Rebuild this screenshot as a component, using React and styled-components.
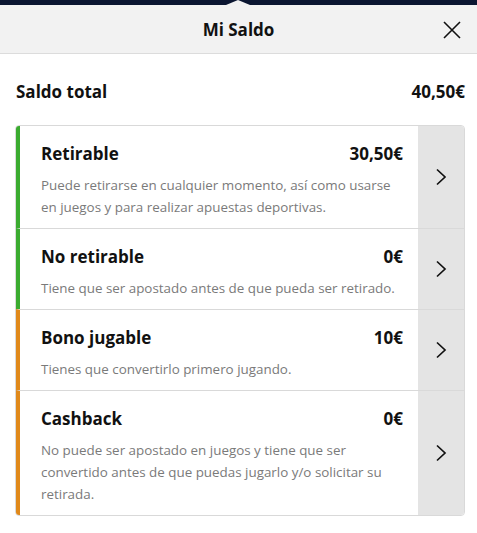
import React from "react";
import styled, { createGlobalStyle } from "styled-components";

const GlobalStyle = createGlobalStyle`
  html, body { margin: 0; padding: 0; background: #fff; }
  body { font-family: "Open Sans", "Noto Sans", sans-serif; color: #111; }
`;

const TopBar = styled.div`
  height: 5px;
  background: #0b1631;
  display: flex;
  justify-content: center;
  align-items: flex-end;
`;

const Caret = styled.div`
  width: 0;
  height: 0;
  margin-right: 2px;
  border-left: 12px solid transparent;
  border-right: 12px solid transparent;
  border-bottom: 5px solid #f2f2f2;
`;

const Header = styled.div`
  height: 48px;
  background: #f2f2f2;
  border-bottom: 1px solid #dcdcdc;
  display: flex;
  align-items: center;
  justify-content: center;
  position: relative;
`;

const HeaderTitle = styled.h1`
  margin: 0;
  font-size: 17px;
  font-weight: 700;
`;

const Close = styled.button`
  position: absolute;
  right: 16px;
  top: 16px;
  width: 18px;
  height: 18px;
  padding: 0;
  border: 0;
  background: none;
  cursor: pointer;
`;

const Body = styled.div`
  padding: 22px 12px 18px 15px;
`;

const TotalRow = styled.div`
  display: flex;
  justify-content: space-between;
  align-items: center;
  font-size: 17px;
  font-weight: 700;
  padding: 0 0 0 1px;
  height: 30px;
  margin-bottom: 19px;
`;

const Card = styled.div`
  border: 1px solid #d9d9d9;
  border-radius: 4px;
  overflow: hidden;
`;

const Row = styled.div`
  display: flex;
  border-left: 4px solid ${(p) => p.accent};
  & + & {
    border-top: 1px solid #d9d9d9;
  }
`;

const Content = styled.div`
  flex: 1;
  padding: 16px 15px 10px 21px;
`;

const TitleLine = styled.div`
  display: flex;
  justify-content: space-between;
  align-items: center;
  font-size: 17px;
  font-weight: 700;
  line-height: 24px;
`;

const Desc = styled.p`
  margin: 8px 0 0;
  font-size: 13.4px;
  line-height: 22px;
  color: #7a7a7a;
`;

const Arrow = styled.div`
  width: 46px;
  background: #e4e4e4;
  display: flex;
  align-items: center;
  justify-content: center;
`;

const Chevron = () => (
  <svg width="12" height="18" viewBox="0 0 12 18" fill="none">
    <path d="M2 1.5 L10 9 L2 16.5" stroke="#111" strokeWidth="1.7" />
  </svg>
);

const items = [
  {
    title: "Retirable",
    amount: "30,50€",
    desc: "Puede retirarse en cualquier momento, así como usarse en juegos y para realizar apuestas deportivas.",
    accent: "#3aab2f",
  },
  {
    title: "No retirable",
    amount: "0€",
    desc: "Tiene que ser apostado antes de que pueda ser retirado.",
    accent: "#3aab2f",
  },
  {
    title: "Bono jugable",
    amount: "10€",
    desc: "Tienes que convertirlo primero jugando.",
    accent: "#e0891a",
  },
  {
    title: "Cashback",
    amount: "0€",
    desc: "No puede ser apostado en juegos y tiene que ser convertido antes de que puedas jugarlo y/o solicitar su retirada.",
    accent: "#e0891a",
  },
];

export default function App() {
  return (
    <>
      <GlobalStyle />
      <TopBar>
        <Caret />
      </TopBar>
      <Header>
        <HeaderTitle>Mi Saldo</HeaderTitle>
        <Close aria-label="Cerrar">
          <svg width="18" height="18" viewBox="0 0 18 18">
            <path d="M1 1 L17 17 M17 1 L1 17" stroke="#111" strokeWidth="1.6" />
          </svg>
        </Close>
      </Header>
      <Body>
        <TotalRow>
          <span>Saldo total</span>
          <span>40,50€</span>
        </TotalRow>
        <Card>
          {items.map((it) => (
            <Row key={it.title} accent={it.accent}>
              <Content>
                <TitleLine>
                  <span>{it.title}</span>
                  <span>{it.amount}</span>
                </TitleLine>
                <Desc>{it.desc}</Desc>
              </Content>
              <Arrow>
                <Chevron />
              </Arrow>
            </Row>
          ))}
        </Card>
      </Body>
    </>
  );
}
